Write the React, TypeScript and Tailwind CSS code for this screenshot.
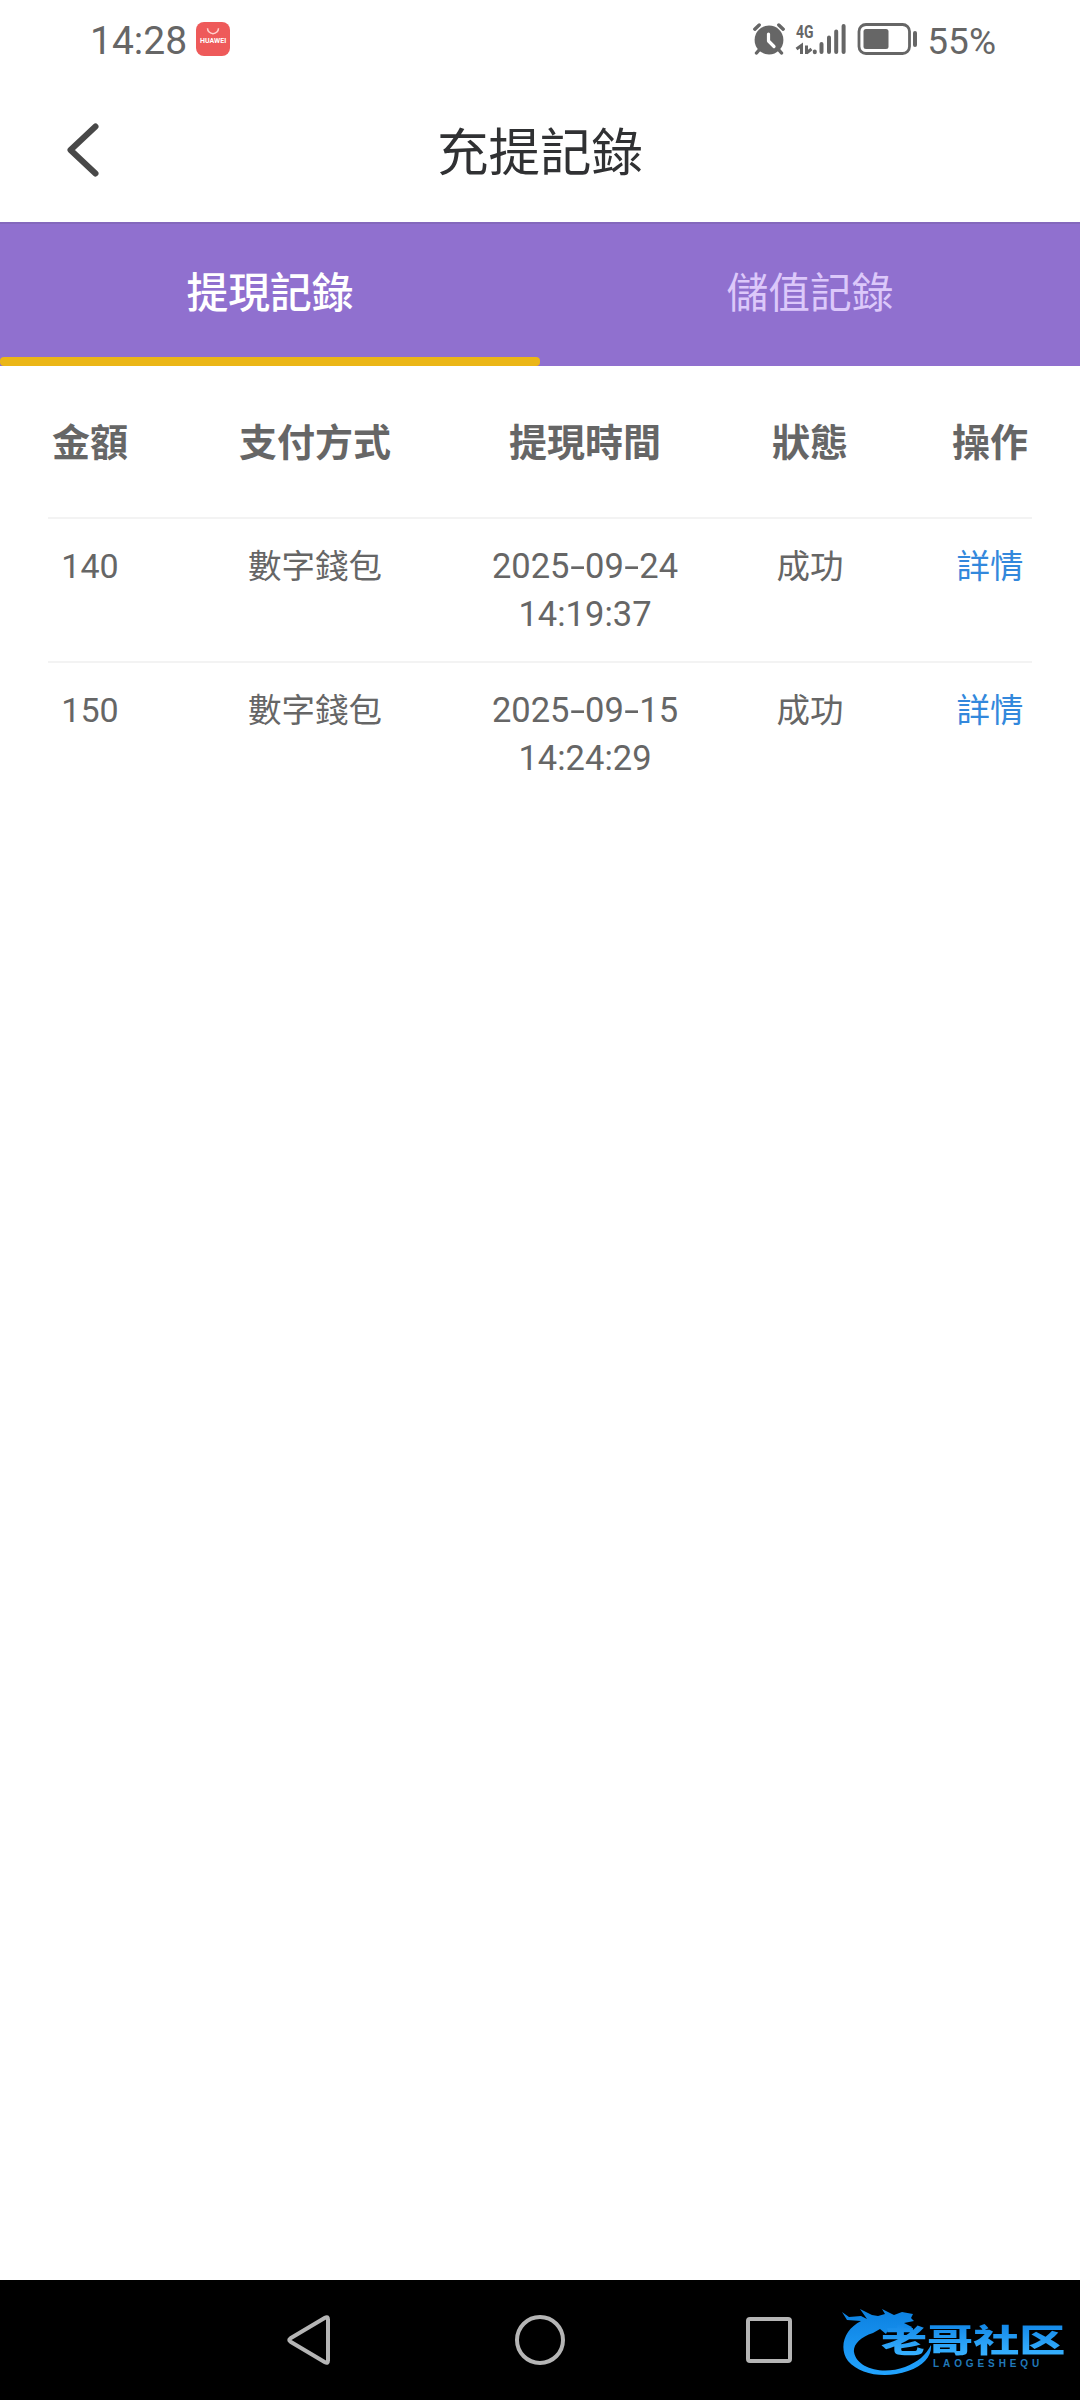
const sans = "font-['Roboto','Noto_Sans_CJK_TC',sans-serif]";

const records = [
  { amount: '140', method: '數字錢包', date: '2025-09-24', time: '14:19:37', status: '成功' },
  { amount: '150', method: '數字錢包', date: '2025-09-15', time: '14:24:29', status: '成功' },
];

const columns = ['金額', '支付方式', '提現時間', '狀態', '操作'];

function AlarmIcon() {
  return (
    <svg width="34" height="34" viewBox="0 0 34 34" fill="none" className="shrink-0">
      <circle cx="17" cy="18" r="14.4" fill="#666" />
      <path d="M2.8 7.2 7.2 3M31.2 7.2 26.800 3" stroke="#666" strokeWidth="3.4" strokeLinecap="round" />
      <path d="M7.500 27.500 4.500 31M26.500 27.500 29.500 31" stroke="#666" strokeWidth="3.4" strokeLinecap="round" />
      <path d="M16.500 12v7l5.500 5.500" stroke="#fff" strokeWidth="3.2" strokeLinecap="round" strokeLinejoin="round" />
    </svg>
  );
}

function SignalIcon() {
  return (
    <svg width="54" height="34" viewBox="0 0 54 34" fill="none" className="shrink-0 overflow-visible">
      <text x="0" y="15.500" fontSize="19" fontWeight="700" fill="#666" textLength="17.500" lengthAdjust="spacingAndGlyphs" fontFamily="Roboto, sans-serif">4G</text>
      <path d="M.500 27 5.500 23.500V32M10.500 23.500V32M10.500 31l5-4" stroke="#666" strokeWidth="3" />
      <g stroke="#666" strokeWidth="4" strokeLinecap="round">
        <path d="M18.800 29.500v.700M25.500 22v8M33 15.500v14.500M40.200 9.500v20.500M47.600 4V30" />
      </g>
    </svg>
  );
}

function BatteryIcon() {
  return (
    <svg width="62" height="34" viewBox="0 0 62 34" fill="none" className="shrink-0">
      <rect x="2" y="2.500" width="50.500" height="29" rx="7" stroke="#666" strokeWidth="2.800" />
      <rect x="6.500" y="7" width="25" height="20" rx="2.500" fill="#666" />
      <path d="M58 11v12" stroke="#666" strokeWidth="4" strokeLinecap="round" />
    </svg>
  );
}

function StatusBar() {
  return (
    <div className="flex h-20 items-center pl-[90px] pr-[84px] text-[#666]">
      <span className="mt-[2px] text-[39px] leading-[80px]">14:28</span>
      <div className="ml-[9px] mt-[-2px] flex h-[34px] w-[34px] flex-col items-center rounded-lg bg-[#ee5a5a]">
        <svg width="14" height="9" viewBox="0 0 14 9" fill="none" className="mt-1">
          <path d="M1.500 2.200a5.500 5.500 0 0 0 11 0" stroke="#ffd0cc" strokeWidth="1.500" />
        </svg>
        <span className="mt-[3px] text-[7px] font-bold leading-[7px] text-white">HUAWEI</span>
      </div>
      <div className="mt-[-2px] ml-auto flex items-center">
        <AlarmIcon />
        <div className="ml-[10px] flex"><SignalIcon /></div>
        <div className="ml-[7px] flex"><BatteryIcon /></div>
      </div>
      <span className="ml-[8px] mt-[3px] text-[37px] leading-[80px]">55%</span>
    </div>
  );
}

function DragonLogo() {
  return (
    <div className="absolute left-[840px] top-4 h-20 w-[230px]">
      <svg width="120" height="82" viewBox="0 0 120 82" className="absolute left-0 top-0">
        <defs>
          <linearGradient id="dragon" x1="0" y1="0" x2="0" y2="1">
            <stop offset="0" stopColor="#0c80e0" />
            <stop offset="1" stopColor="#22a4ff" />
          </linearGradient>
        </defs>
        <path
          d="M2 18 9 23 21 22 27 25 20 15 32 21 38 22 45 20 42 15 54 21 62 18 73 20 71 24 74 27 64 29 72 33 69 38 58 34 48 36 46 40 40 35 33 39C20 43 13 51 14 58C17 75 43 81 65 73C78 68 86 61 91 51C92 61 84 72 68 77C46 85 20 81 8 67C-2 53 5 35 21 27L7 26Z"
          fill="url(#dragon)"
          transform="translate(0 -2)"
        />
      </svg>
      <span className="absolute left-[41px] top-[25px] h-[35px] origin-top-left scale-x-[1.44] whitespace-nowrap bg-gradient-to-b from-[#0d84e6] to-[#38b2ff] bg-clip-text font-['Noto_Sans_CJK_SC',sans-serif] text-[32px] font-black leading-[35px] text-transparent">
        老哥社区
      </span>
      <span className="absolute left-[93px] top-[62px] whitespace-nowrap font-['Liberation_Sans',sans-serif] text-[10px] font-bold leading-[12px] tracking-[3.900px] text-[#2078b8]">
        LAOGESHEQU
      </span>
    </div>
  );
}

function NavigationBar() {
  return (
    <nav className="relative mt-auto flex h-[120px] items-center bg-black pl-[284px]">
      <svg width="50" height="56" viewBox="0 0 50 56" fill="none">
        <path d="M6.500 26.300 41 5.700Q44 4 44 7.500V48.500Q44 52 41 50.300L6.500 29.700Q4 28 6.500 26.300Z" stroke="#b5b5b5" strokeWidth="4" strokeLinejoin="round" />
      </svg>
      <div className="ml-[181px] size-[50px] rounded-full border-[4.500px] border-[#b5b5b5]" />
      <div className="ml-[181px] h-[46px] w-[46px] rounded-[4px] border-4 border-[#b5b5b5]" />
      <DragonLogo />
    </nav>
  );
}

function RecordDate({ value }: { value: string }) {
  return (
    <div>
      {value.split('').map((char, i) =>
        char === '-' ? (
          <span key={i} className="inline-block w-[15.500px] origin-center scale-x-[1.550]">-</span>
        ) : (
          char
        ),
      )}
    </div>
  );
}

export default function App() {
  return (
    <div className={`${sans} flex h-[2400px] w-[1080px] flex-col overflow-hidden bg-white text-[#666]`}>
      <StatusBar />

      <header className="grid h-[142px] grid-cols-[1fr_auto_1fr] items-center pl-[64px]">
        <svg width="38" height="58" viewBox="0 0 38 58" fill="none" className="mt-[-2px]">
          <path d="M31.500 5.500 6.500 29 31.500 52.500" stroke="#484848" strokeWidth="6" strokeLinecap="round" strokeLinejoin="round" />
        </svg>
        <h1 className="ml-[-64px] mt-[6px] text-[51.500px] leading-[136px] text-[#303133]">充提記錄</h1>
      </header>

      <div className="grid h-36 grid-cols-2 border-t-2 border-[#8468bc] bg-[#9070cf] text-center text-[41.800px] leading-[139px]">
        <div className="relative font-medium text-white">
          提現記錄
          <span className="absolute bottom-0 left-0 h-[9px] w-full rounded-[4px] bg-[#ebb617]" />
        </div>
        <div className="text-[#dcc8fa]">儲值記錄</div>
      </div>

      <div className="grid h-[151px] grid-cols-[180px_270px_270px_180px_180px] text-center text-[38px] font-bold leading-[154px]">
        {columns.map((title) => (
          <div key={title}>{title}</div>
        ))}
      </div>

      {records.map((record) => (
        <div key={record.date}>
          <div className="mx-12 h-0.5 bg-[#f3f3f3]" />
          <div className="grid h-[142px] grid-cols-[180px_270px_270px_180px_180px] pt-6 text-center text-[33.500px] leading-[48px]">
            <div className="mt-[-1px] text-[34px]">{record.amount}</div>
            <div>{record.method}</div>
            <div className="mt-[-1px] text-[34.500px]">
              <RecordDate value={record.date} />
              <div>{record.time}</div>
            </div>
            <div>{record.status}</div>
            <div className="text-[#3388dc]">詳情</div>
          </div>
        </div>
      ))}

      <NavigationBar />
    </div>
  );
}
